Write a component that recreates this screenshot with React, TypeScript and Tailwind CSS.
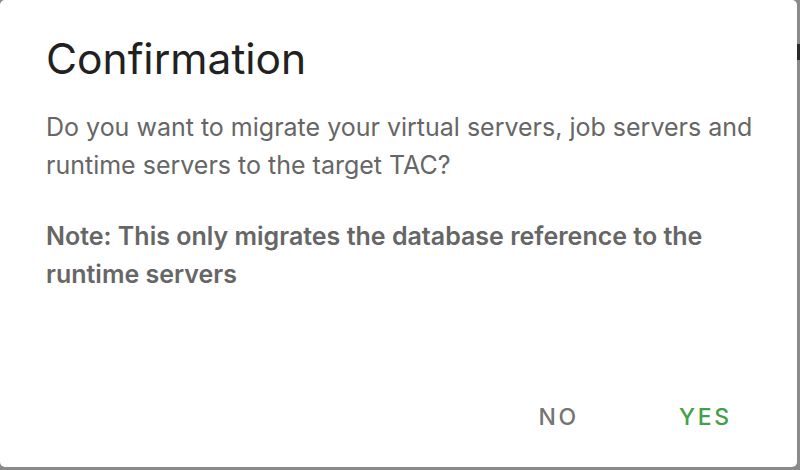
export default function App() {
  return (
    <div className="relative h-[470px] w-[800px] overflow-hidden bg-[#8a8a8a]" style={{ fontFamily: "Inter, 'Noto Sans', sans-serif" }}>
      <div className="absolute right-0 top-[44px] h-[16px] w-[3px] bg-[#2a2a2a]" />
      <div className="relative flex h-[467px] w-[797px] flex-col rounded-[5px] bg-white pl-[46px] pr-[30px]">
        <h2 className="mt-[34px] text-[42.5px] font-normal leading-[50px] text-[#212121]">Confirmation</h2>
        <p className="mt-[24px] text-[25px] leading-[38px] text-[#666666]">
          Do you want to migrate your virtual servers, job servers and runtime servers to the target TAC?
        </p>
        <p className="mt-[33px] text-[25px] font-semibold leading-[38px] text-[#666666]">
          Note: This only migrates the database reference to the runtime servers
        </p>
        <div className="mt-auto flex justify-end gap-[100px] pb-[28px] pr-[35px]">
          <button className="py-[8px] text-[23px] font-medium uppercase leading-[28px] tracking-[0.12em] text-[#757575]">
            No
          </button>
          <button className="py-[8px] text-[23px] font-medium uppercase leading-[28px] tracking-[0.12em] text-[#43a047]">
            Yes
          </button>
        </div>
      </div>
    </div>
  );
}
